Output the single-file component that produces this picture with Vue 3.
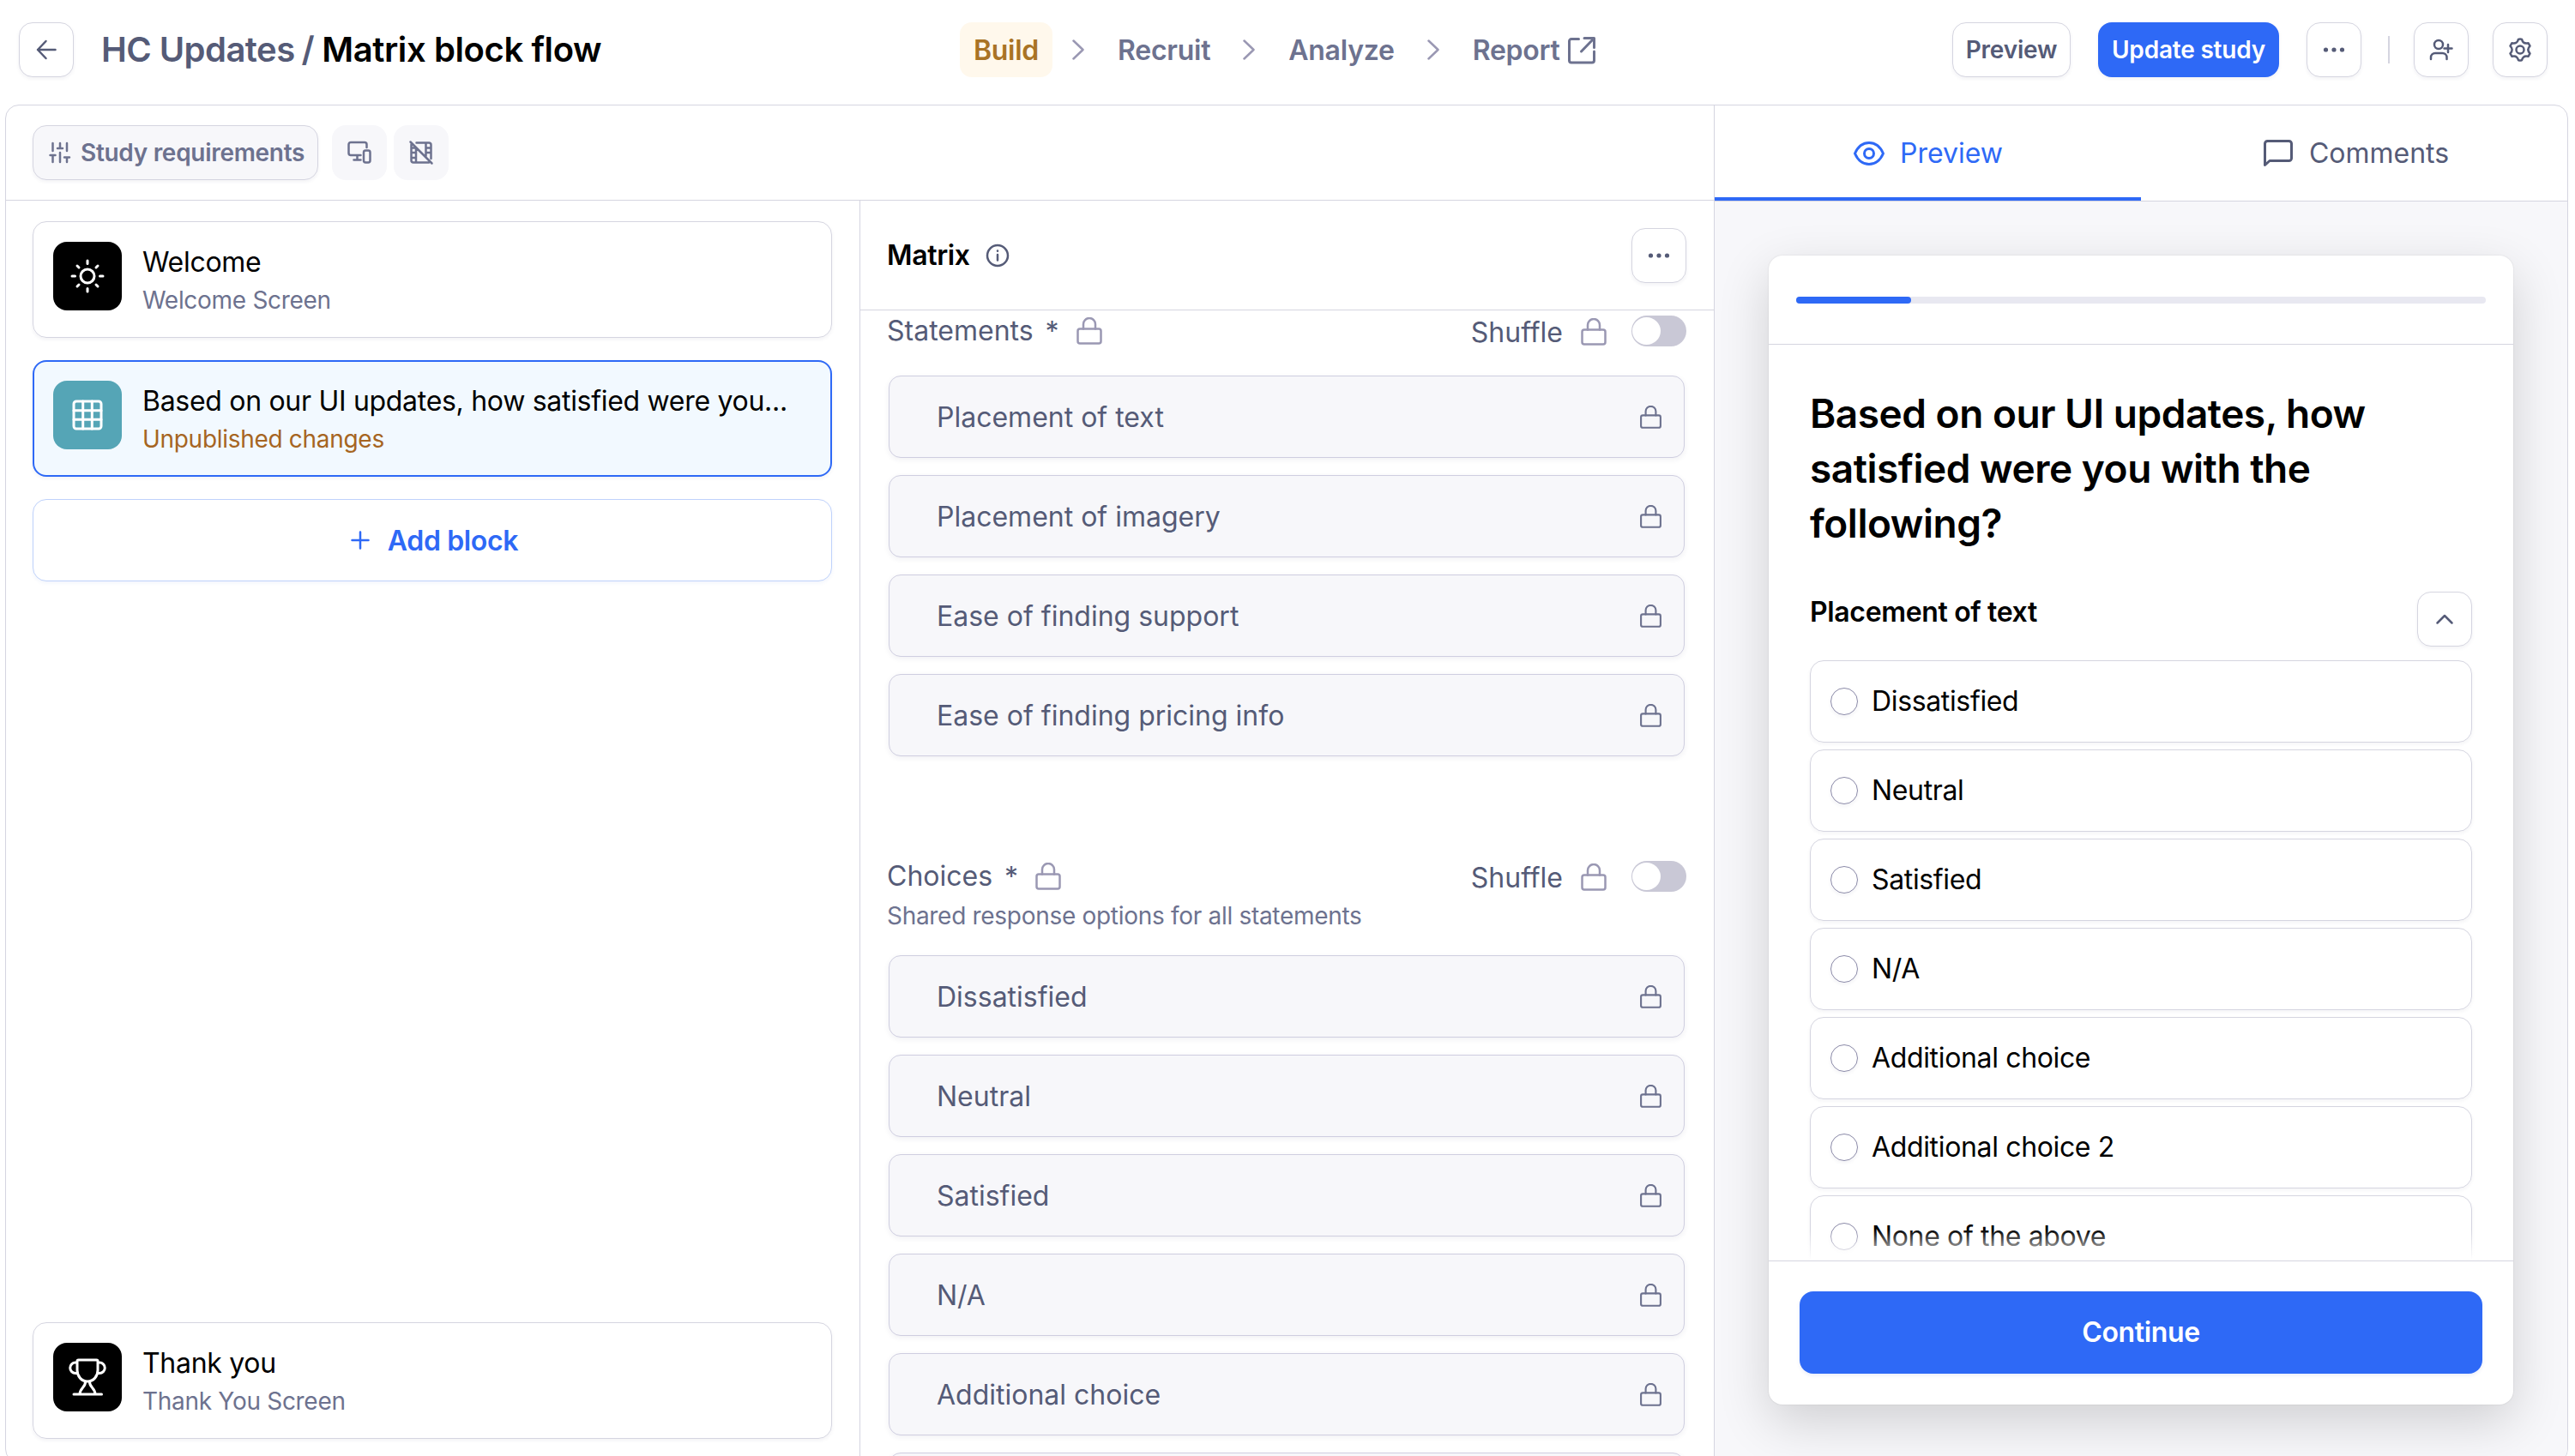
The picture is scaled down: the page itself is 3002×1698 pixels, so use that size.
<script setup>
import { ref } from 'vue'

const blocks = [
  { icon: 'sun', title: 'Welcome', note: 'Welcome Screen' },
  { icon: 'grid', title: 'Based on our UI updates, how satisfied were you...', note: 'Unpublished changes', active: true }
]
const lastBlock = { title: 'Thank you', note: 'Thank You Screen' }

const steps = ['Recruit', 'Analyze']
const statements = ['Placement of text', 'Placement of imagery', 'Ease of finding support', 'Ease of finding pricing info']
const choices = ['Dissatisfied', 'Neutral', 'Satisfied', 'N/A', 'Additional choice', 'Additional choice 2', 'None of the above']

const tab = ref('preview')
const progress = ref(16.67)
</script>

<template>
  <!-- shared icon shapes -->
  <svg class="defs" aria-hidden="true">
    <symbol id="lock" viewBox="0 0 32 32">
      <rect x="2.5" y="13.5" width="27" height="17" rx="2.5" />
      <path d="M9 13.5V8a7 7 0 0 1 14 0v5.5" />
    </symbol>
    <symbol id="dots" viewBox="0 0 28 28">
      <circle cx="4.5" cy="14" r="2.6" /><circle cx="14" cy="14" r="2.6" /><circle cx="23.5" cy="14" r="2.6" />
    </symbol>
    <symbol id="chevron" viewBox="0 0 14 24">
      <path d="M1.500 1.500L12.500 12L1.500 22.500" />
    </symbol>
  </svg>

  <div class="page">
    <header class="topbar">
      <div class="top-left">
        <button class="btn square">
          <svg class="icon i24" viewBox="0 0 24 24"><path d="M22.500 12H2M11.500 2L2 12l9.500 10" /></svg>
        </button>
        <h1 class="crumb"><span>HC Updates</span><span class="slash">/</span>Matrix block flow</h1>
      </div>
      <nav class="steps">
        <span class="step current">Build</span>
        <template v-for="s in steps" :key="s">
          <svg class="icon chevron"><use href="#chevron" /></svg>
          <span class="step">{{ s }}</span>
        </template>
        <svg class="icon chevron"><use href="#chevron" /></svg>
        <span class="step report">Report
          <svg class="icon i32" viewBox="0 0 32 32"><path d="M12.500 2.500H4A2.500 2.500 0 0 0 1.500 5v22.500A2.500 2.500 0 0 0 4 30h24a2.500 2.500 0 0 0 2.500-2.500V17M19 1.500H30.500V12.500M30 2L15.500 17" /></svg>
        </span>
      </nav>
      <div class="actions">
        <button class="btn text">Preview</button>
        <button class="btn text primary">Update study</button>
        <button class="btn square"><svg class="dots"><use href="#dots" /></svg></button>
        <i class="divider"></i>
        <button class="btn square">
          <svg class="icon i28" viewBox="0 0 28 28"><circle cx="11" cy="8" r="5" /><path d="M2 25v-2a5 5 0 0 1 5-5h8.500a5 5 0 0 1 5 5v2M22 8v9M17.500 12.500h9" /></svg>
        </button>
        <button class="btn square gear">
          <svg class="icon i28" viewBox="0 0 28 28"><circle cx="14" cy="14" r="4.500" /><path d="M12 1.900Q14 .9 16 1.900Q17.600 7.800 23.500 6.200L25.500 9.700Q21.200 14 25.500 18.300L23.500 21.800Q17.600 20.200 16 26.100Q14 27.100 12 26.100Q10.400 20.200 4.500 21.800L2.500 18.300Q6.800 14 2.500 9.700L4.500 6.200Q10.400 7.800 12 1.900z" /></svg>
        </button>
      </div>
    </header>

    <main class="panel">
      <section class="editor">
        <div class="toolbar">
          <button class="btn requirements">
            <svg class="icon i24" viewBox="0 0 24 24"><path d="M3.500 1v9M3.500 15v8M12 1v6M12 12v11M20 1v9M20 17.500V23M.5 15h6M9 7h6M17 17.500h6" /></svg>
            Study requirements
          </button>
          <span class="chip">
            <svg class="icon i28" viewBox="0 0 28 28"><path d="M22.500 8V4.500A2.500 2.500 0 0 0 20 2H4a2.500 2.500 0 0 0-2.500 2.500v10A2.500 2.500 0 0 0 4 17h11.500M11.500 17v5.500M7.500 22.500h8" /><rect x="19" y="11.500" width="7.500" height="14" rx="2.200" /></svg>
          </span>
          <span class="chip">
            <svg class="icon i28" viewBox="0 0 28 28"><path d="M8.500 2.500H23A2.500 2.500 0 0 1 25.500 5v16M23 25.500H5A2.500 2.500 0 0 1 2.500 23V4.500M8 9v16M19.500 3v15M3 8.500h4M3 14h5M3 20h5M20 8.500h5M20 14h5M1.500 1.500l25 25" /></svg>
          </span>
        </div>

        <div class="columns">
          <div class="blocks">
            <article v-for="b in blocks" :key="b.title" class="block" :class="{ active: b.active }">
              <span class="tile" :class="{ teal: b.active }">
                <svg v-if="b.icon === 'sun'" class="icon i40" viewBox="0 0 40 40"><circle cx="20" cy="20" r="8" /><path d="M20 2v3.500M20 34.500V38M2 20h3.500M34.500 20H38M8 8l2 2M30 30l2 2M8 32l2-2M30 10l2-2" /></svg>
                <svg v-else class="icon i36" viewBox="0 0 36 36"><rect x="2" y="2" width="32" height="32" rx="3" /><path d="M12.700 2v32M23.300 2v32M2 12.700h32M2 23.300h32" /></svg>
              </span>
              <div class="block-text">
                <h3>{{ b.title }}</h3>
                <p>{{ b.note }}</p>
              </div>
            </article>
            <button class="add">
              <svg class="icon i24" viewBox="0 0 24 24"><path d="M12 2.500v19M2.500 12h19" /></svg>
              Add block
            </button>
            <article class="block last">
              <span class="tile">
                <svg class="icon i44" viewBox="0 0 44 44"><path d="M11.500 2h21A1.500 1.500 0 0 1 34 3.500V14c0 7-5 13-12 13S10 21 10 14V3.500A1.500 1.500 0 0 1 11.500 2zM10 5H8a6 6 0 0 0 0 12.500h2.500M34 5h2a6 6 0 0 1 0 12.500h-2.500M19.500 27.500c.5 6-6.500 7.500-6.500 14.500M24.500 27.500c-.5 6 6.500 7.500 6.500 14.500M6 42h32.500" /></svg>
              </span>
              <div class="block-text">
                <h3>{{ lastBlock.title }}</h3>
                <p>{{ lastBlock.note }}</p>
              </div>
            </article>
          </div>

          <div class="detail">
            <div class="detail-head">
              <h2>Matrix</h2>
              <svg class="icon i28" viewBox="0 0 28 28"><circle cx="14" cy="14" r="12" /><path d="M14 13v6.500M14 8.600v.1" /></svg>
              <button class="btn square"><svg class="dots"><use href="#dots" /></svg></button>
            </div>
            <div class="detail-body">
              <div class="field-head">
                <span class="label">Statements</span><span class="star">*</span>
                <svg class="icon lock"><use href="#lock" /></svg>
                <div class="shuffle">
                  <span>Shuffle</span>
                  <svg class="icon lock"><use href="#lock" /></svg>
                  <i class="toggle"></i>
                </div>
              </div>
              <div class="rows">
                <div v-for="s in statements" :key="s" class="row">
                  {{ s }}<svg class="icon lock small"><use href="#lock" /></svg>
                </div>
              </div>
              <div class="field-head second">
                <span class="label">Choices</span><span class="star">*</span>
                <svg class="icon lock"><use href="#lock" /></svg>
                <div class="shuffle">
                  <span>Shuffle</span>
                  <svg class="icon lock"><use href="#lock" /></svg>
                  <i class="toggle"></i>
                </div>
              </div>
              <p class="hint">Shared response options for all statements</p>
              <div class="rows">
                <div v-for="c in choices.slice(0, 6)" :key="c" class="row">
                  {{ c }}<svg class="icon lock small"><use href="#lock" /></svg>
                </div>
              </div>
            </div>
          </div>
        </div>
      </section>

      <aside class="side">
        <div class="tabs">
          <div class="tab" :class="{ on: tab === 'preview' }" @click="tab = 'preview'">
            <svg class="icon i36" viewBox="0 0 36 36"><path d="M1.500 18C5 10 11 5.500 18 5.500S31 10 34.500 18C31 26 25 30.500 18 30.500S5 26 1.500 18z" /><circle cx="18" cy="18" r="5.500" /></svg>
            Preview
          </div>
          <div class="tab" :class="{ on: tab === 'comments' }" @click="tab = 'comments'">
            <svg class="icon i36" viewBox="0 0 36 36"><path d="M2.500 31.500V6.500a3 3 0 0 1 3-3h25a3 3 0 0 1 3 3v17a3 3 0 0 1-3 3H8z" /></svg>
            Comments
          </div>
        </div>
        <div class="stage">
          <div class="device">
            <div class="device-top">
              <div class="track"><div class="fill" :style="{ width: progress + '%' }"></div></div>
            </div>
            <div class="device-body">
              <h2>Based on our UI updates, how satisfied were you with the following?</h2>
              <div class="question">
                <h4>Placement of text</h4>
                <button class="btn square">
                  <svg class="icon i20" viewBox="0 0 20 20"><path d="M1.500 14.500L10 6l8.500 8.500" /></svg>
                </button>
              </div>
              <div class="options">
                <label v-for="c in choices" :key="c" class="option"><i class="radio"></i><span>{{ c }}</span></label>
              </div>
              <div class="fade"></div>
            </div>
            <div class="device-foot">
              <button class="continue">Continue</button>
            </div>
          </div>
        </div>
      </aside>
    </main>
  </div>
</template>

<style>
html,
body {
  margin: 0;
  background: #fff;
  overflow: hidden;
}
</style>

<style scoped>
.defs {
  position: absolute;
  width: 0;
  height: 0;
}

.page {
  --line: #d5d5e0;
  --ink: #555b77;
  --muted: #6d728f;
  --blue: #2e69f6;
  width: 3002px;
  height: 1698px;
  box-sizing: border-box;
  overflow: hidden;
  background: #fff;
  color: #000;
  font-family: Inter, 'Liberation Sans', sans-serif;
  font-size: 32px;
}

.page * {
  box-sizing: border-box;
}

h1,
h2,
h3,
h4,
p {
  margin: 0;
  font-size: inherit;
  font-weight: 400;
}

button {
  font: inherit;
  padding: 0;
}

/* icons */
.icon {
  display: block;
  flex: none;
  fill: none;
  stroke: currentColor;
  stroke-width: 2.5;
  stroke-linecap: round;
  stroke-linejoin: round;
  overflow: visible;
}

.i20 { width: 20px; height: 20px; }
.i24 { width: 24px; height: 24px; }
.i28 { width: 28px; height: 28px; }
.i32 { width: 32px; height: 32px; stroke-width: 3; }
.i36 { width: 36px; height: 36px; stroke-width: 3; }
.i40 { width: 40px; height: 40px; stroke-width: 3; }
.i44 { width: 44px; height: 44px; stroke-width: 3; }

.dots {
  width: 28px;
  height: 28px;
  fill: currentColor;
}

.lock {
  width: 32px;
  height: 32px;
  color: #9a98b3;
}

.lock.small {
  width: 27px;
  height: 27px;
  color: var(--muted);
}

/* buttons */
.btn {
  display: flex;
  align-items: center;
  justify-content: center;
  flex: none;
  height: 64px;
  border: 1px solid var(--line);
  border-radius: 16px;
  background: #fff;
  color: var(--ink);
  box-shadow: 0 2px 4px rgba(40, 40, 80, 0.06);
}

.btn.square {
  width: 64px;
}

.btn.text {
  width: 138px;
  font-size: 28px;
  font-weight: 600;
  letter-spacing: -0.2px;
}

.btn.primary {
  width: 211px;
  margin: 0 32px;
  border: 0;
  background: var(--blue);
  color: #fff;
}

/* header */
.topbar {
  display: grid;
  grid-template-columns: 1097px 1fr auto;
  align-items: center;
  height: 122px;
  padding: 0 32px 6px 22px;
}

.top-left {
  display: flex;
  align-items: center;
}

.crumb {
  display: flex;
  margin-left: 32px;
  font-size: 40px;
  font-weight: 600;
  letter-spacing: -0.4px;
  line-height: 48px;
  white-space: nowrap;
}

.crumb span {
  color: var(--ink);
  letter-spacing: -0.55px;
}

.crumb .slash {
  margin: 0 9px 0 8px;
}

.steps {
  display: flex;
  align-items: center;
  color: var(--muted);
  font-weight: 600;
  letter-spacing: -0.25px;
}

.step.current {
  display: flex;
  align-items: center;
  justify-content: center;
  width: 108px;
  height: 64px;
  border-radius: 14px;
  background: #fff8ec;
  color: #a97325;
}

.chevron {
  width: 14px;
  height: 24px;
  margin: 0 39px 0 38px;
  color: #9a98b3;
}

.current + .chevron {
  margin-left: 23px;
}

.report {
  display: flex;
  align-items: center;
  gap: 9px;
}

.report .icon {
  margin-top: 2px;
}

.actions {
  display: flex;
  align-items: center;
}

.divider {
  width: 2px;
  height: 32px;
  margin: 0 28px 0 31px;
  background: var(--line);
}

.gear {
  margin-left: 28px;
}

/* main panel runs past the bottom edge */
.panel {
  display: flex;
  width: 2988px;
  height: 1584px;
  margin-left: 6px;
  border: 1px solid var(--line);
  border-radius: 16px;
  overflow: hidden;
}

.editor {
  width: 1991px;
  flex: none;
}

.toolbar {
  display: flex;
  align-items: center;
  gap: 8px;
  height: 111px;
  padding-left: 31px;
  border-bottom: 1px solid var(--line);
}

.requirements {
  justify-content: flex-start;
  width: 333px;
  gap: 12px;
  margin-right: 8px;
  padding-left: 19px;
  background: #f7f7fa;
  color: var(--muted);
  font-size: 28px;
  font-weight: 600;
  letter-spacing: -0.3px;
}

.chip {
  display: flex;
  align-items: center;
  justify-content: center;
  width: 64px;
  height: 64px;
  border-radius: 16px;
  background: #f7f7fa;
  color: var(--muted);
}

.columns {
  display: flex;
  height: 1472px;
}

/* block list */
.blocks {
  display: flex;
  flex-direction: column;
  gap: 26px;
  width: 996px;
  flex: none;
  padding: 24px 32px 28px 31px;
  border-right: 1px solid var(--line);
}

.block {
  display: flex;
  align-items: flex-start;
  flex: none;
  height: 136px;
  padding: 23px;
  border: 1px solid var(--line);
  border-radius: 16px;
  box-shadow: 0 2px 4px rgba(40, 40, 80, 0.06);
}

.block.active {
  padding: 22px;
  border: 2px solid var(--blue);
  background: #f2f9ff;
}

.block.last {
  margin-top: auto;
}

.tile {
  display: flex;
  align-items: center;
  justify-content: center;
  flex: none;
  width: 80px;
  height: 80px;
  border-radius: 16px;
  background: #000;
  color: #fff;
}

.tile.teal {
  background: #55a5b6;
}

.block-text {
  margin-left: 24px;
  white-space: nowrap;
  letter-spacing: -0.3px;
}

.block-text h3 {
  line-height: 48px;
}

.block-text p {
  color: var(--muted);
  font-size: 28px;
  line-height: 40px;
}

.active .block-text p {
  color: #a66522;
}

.add {
  display: flex;
  align-items: center;
  justify-content: center;
  gap: 20px;
  flex: none;
  height: 96px;
  padding-left: 4px;
  border: 1px solid #bfd2fb;
  border-radius: 16px;
  background: #fff;
  color: var(--blue);
  font-weight: 600;
  letter-spacing: -0.35px;
  box-shadow: 0 2px 4px rgba(40, 80, 200, 0.06);
}

/* block editor */
.detail {
  flex: 1;
}

.detail-head {
  display: flex;
  align-items: center;
  height: 128px;
  padding: 0 32px 0 31px;
  border-bottom: 1px solid var(--line);
}

.detail-head h2 {
  margin-right: 18px;
  font-weight: 600;
  letter-spacing: -0.35px;
}

.detail-head .icon {
  color: var(--ink);
}

.detail-head .btn {
  margin-left: auto;
}

.detail-body {
  height: 1344px;
  padding: 6px 32px 0 31px;
  overflow: hidden;
}

.field-head {
  display: flex;
  align-items: center;
  height: 36px;
  color: var(--ink);
}

.field-head.second {
  margin-top: 122px;
}

.label {
  padding-bottom: 1px;
}

.star {
  margin: 0 19px 0 14px;
}

.shuffle {
  display: flex;
  align-items: center;
  gap: 20px;
  margin-left: auto;
  padding-top: 2px;
}

.toggle {
  display: block;
  width: 64px;
  height: 36px;
  margin: -2px 0 0 8px;
  padding: 2px 1px;
  border-radius: 18px;
  background: #c9c8d6;
}

.toggle::before {
  content: '';
  display: block;
  width: 33px;
  height: 32px;
  border-radius: 50%;
  background: #fff;
}

.hint {
  height: 40px;
  margin-top: 8px;
  color: var(--muted);
  font-size: 28px;
  letter-spacing: -0.3px;
  line-height: 40px;
}

.rows {
  display: flex;
  flex-direction: column;
  gap: 20px;
  margin: 34px 2px 0;
}

.hint + .rows {
  margin-top: 26px;
}

.row {
  display: flex;
  align-items: center;
  justify-content: space-between;
  flex: none;
  height: 96px;
  padding: 0 25px 0 55px;
  border: 1px solid #cfcee0;
  border-radius: 14px;
  background: #f7f7fa;
  color: var(--ink);
  box-shadow: 0 2px 6px rgba(40, 40, 80, 0.07);
}

/* preview */
.side {
  flex: 1;
  border-left: 1px solid var(--line);
}

.tabs {
  display: flex;
  height: 112px;
  border-bottom: 1px solid var(--line);
}

.tab {
  display: flex;
  align-items: center;
  justify-content: center;
  gap: 18px;
  width: 497px;
  padding: 4px 0 0 1px;
  border-bottom: 4px solid transparent;
  color: var(--ink);
}

.tab + .tab {
  padding-left: 4px;
}

.tab.on {
  border-bottom-color: var(--blue);
  color: var(--blue);
}

.stage {
  height: 1471px;
  padding: 63px 63px 0;
  background: #f7f7fa;
}

.device {
  display: flex;
  flex-direction: column;
  width: 868px;
  height: 1340px;
  border-radius: 16px;
  background: #fff;
  box-shadow: 0 0 2px rgba(0, 0, 0, 0.12), 0 20px 60px rgba(0, 0, 0, 0.16);
}

.device-top {
  flex: none;
  height: 104px;
  padding: 48px 32px 0;
  border-bottom: 1px solid var(--line);
}

.track {
  height: 8px;
  border-radius: 4px;
  background: #e8e8f1;
}

.fill {
  height: 8px;
  border-radius: 4px;
  background: var(--blue);
}

.device-body {
  position: relative;
  flex: 1;
  min-height: 0;
  padding: 48px;
  overflow: hidden;
}

.device-body h2 {
  font-size: 46px;
  font-weight: 600;
  letter-spacing: -0.48px;
  line-height: 64px;
}

.question {
  display: flex;
  justify-content: space-between;
  margin-top: 48px;
}

.question h4 {
  font-weight: 600;
  letter-spacing: -0.35px;
  line-height: 48px;
}

.options {
  display: flex;
  flex-direction: column;
  gap: 8px;
  margin-top: 16px;
}

.option {
  display: flex;
  align-items: center;
  flex: none;
  height: 96px;
  padding-left: 23px;
  border: 1px solid var(--line);
  border-radius: 16px;
  letter-spacing: -0.35px;
  box-shadow: 0 2px 4px rgba(40, 40, 80, 0.05);
}

.option span {
  padding-bottom: 2px;
}

.radio {
  width: 32px;
  height: 32px;
  margin-right: 16px;
  border: 1px solid #8b8aa8;
  border-radius: 50%;
  box-shadow: 0 2px 4px rgba(40, 40, 80, 0.06);
}

.fade {
  position: absolute;
  left: 0;
  right: 0;
  bottom: 0;
  height: 36px;
  background: linear-gradient(rgba(255, 255, 255, 0), #fff);
}

.device-foot {
  flex: none;
  height: 168px;
  padding: 35px 36px 0;
  border-top: 1px solid var(--line);
}

.continue {
  width: 100%;
  height: 96px;
  padding-bottom: 2px;
  border: 0;
  border-radius: 16px;
  background: var(--blue);
  color: #fff;
  font-weight: 600;
  letter-spacing: -0.35px;
  box-shadow: 0 2px 4px rgba(40, 80, 200, 0.1);
}
</style>
